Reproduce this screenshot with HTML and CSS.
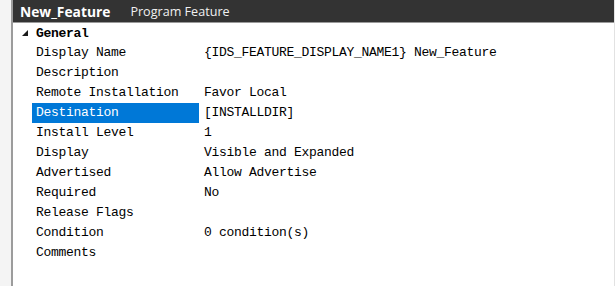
FILE: index.html
```html
<!DOCTYPE html>
<html lang="en">
<head>
  <meta charset="UTF-8" />
  <title>New_Feature - Program Feature</title>
  <link rel="stylesheet" href="styles.css">
</head>
<body>
  <div class="panel">
    <div class="header">
      <span class="header-title">New_Feature</span>
      <span class="header-sub">Program Feature</span>
    </div>

    <div class="group">
      <svg class="toggle" width="6" height="6" viewBox="0 0 6 6"><polygon points="6,0 6,6 0,6" fill="#1a1a1a"/></svg>
      <span>General</span>
    </div>

    <div class="props">
      <div class="row"><div class="name">Display Name</div><div class="value">{IDS_FEATURE_DISPLAY_NAME1} New_Feature</div></div>
      <div class="row"><div class="name">Description</div><div class="value"></div></div>
      <div class="row"><div class="name">Remote Installation</div><div class="value">Favor Local</div></div>
      <div class="row selected"><div class="name">Destination</div><div class="value">[INSTALLDIR]</div></div>
      <div class="row"><div class="name">Install Level</div><div class="value">1</div></div>
      <div class="row"><div class="name">Display</div><div class="value">Visible and Expanded</div></div>
      <div class="row"><div class="name">Advertised</div><div class="value">Allow Advertise</div></div>
      <div class="row"><div class="name">Required</div><div class="value">No</div></div>
      <div class="row"><div class="name">Release Flags</div><div class="value"></div></div>
      <div class="row"><div class="name">Condition</div><div class="value">0 condition(s)</div></div>
      <div class="row"><div class="name">Comments</div><div class="value"></div></div>
    </div>
  </div>
</body>
</html>
```

FILE: styles.css
```css
html, body {
  height: 100%;
}
body {
  margin: 0;
  background: #f4f4f4;
  font-family: "Liberation Mono", "DejaVu Sans Mono", monospace;
  font-size: 13px;
  color: #000;
}
.panel {
  margin-left: 11px;
  height: 100%;
  background: #fff;
  border-left: 2px solid #9c9c9c;
  border-right: 1px solid #e2e2e2;
  box-sizing: border-box;
}
.header {
  height: 22px;
  background: #333333;
  border-bottom: 1px solid #9a9a9a;
  display: flex;
  align-items: center;
  padding-left: 7px;
  gap: 20px;
  font-family: "Open Sans", "Liberation Sans", sans-serif;
  color: #fff;
}
.header-title {
  font-weight: 700;
  font-size: 13.8px;
}
.header-sub {
  font-size: 12.6px;
  color: #f0f0f0;
}
.group {
  height: 20px;
  display: flex;
  align-items: center;
  padding-left: 9px;
  gap: 8px;
  font-weight: 700;
  letter-spacing: -0.3px;
}
.toggle {
  display: block;
}
.row {
  display: flex;
  height: 20px;
  line-height: 20px;
  letter-spacing: -0.3px;
}
.name {
  width: 163px;
  margin-left: 19px;
  padding-left: 4px;
}
.value {
  padding-left: 5px;
  white-space: nowrap;
}
.selected .name {
  background: #0078d7;
  color: #fff;
}
```
